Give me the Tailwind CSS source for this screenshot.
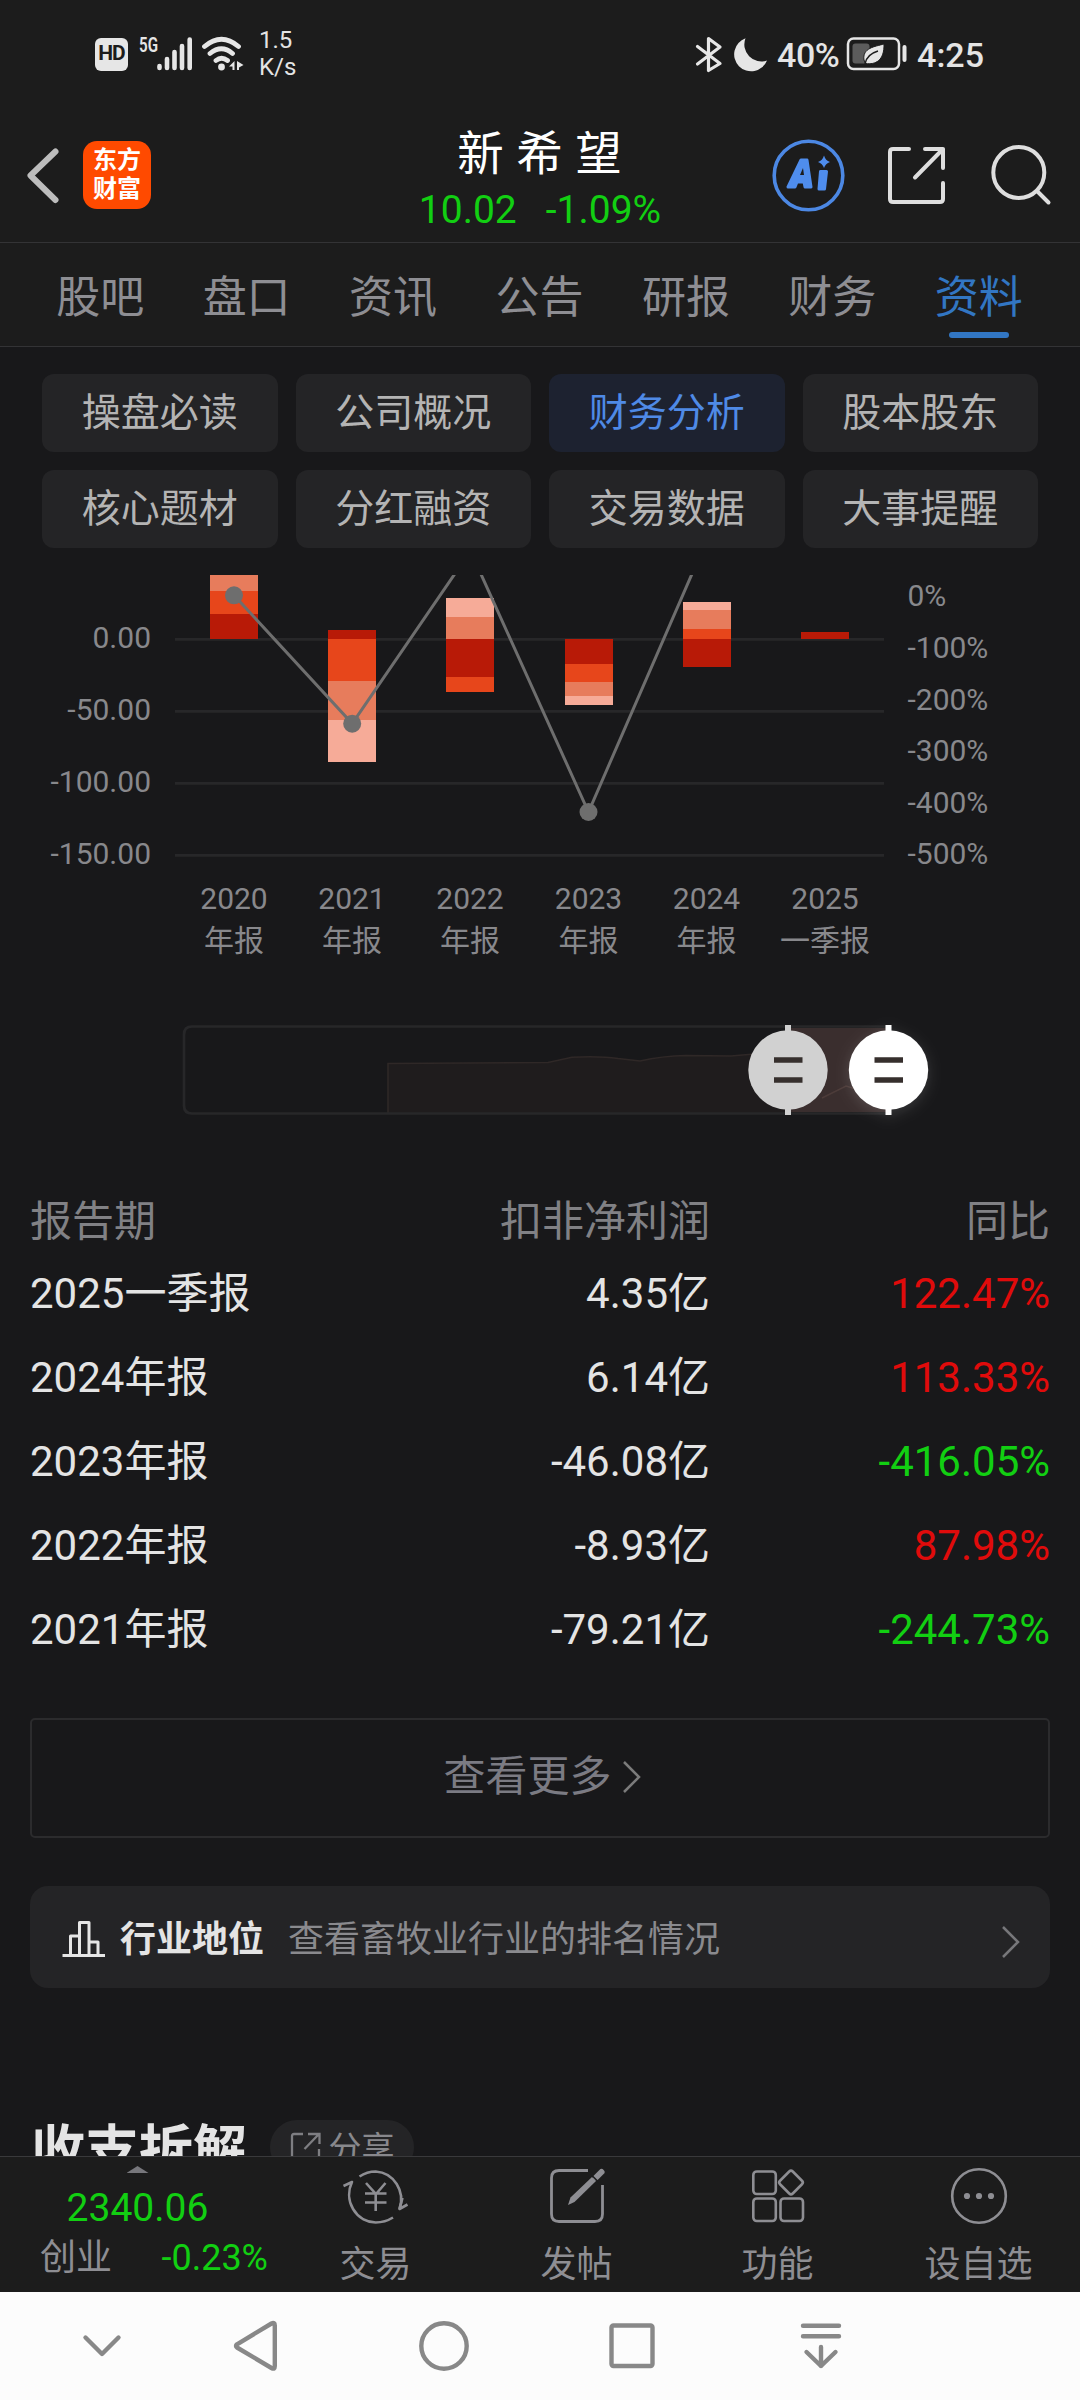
<!DOCTYPE html>
<html lang="zh-CN">
<head>
  <meta charset="UTF-8" />
  <meta name="viewport" content="width=device-width, initial-scale=1.0" />
  <title>新希望 - 财务分析</title>
  <script src="https://cdn.jsdelivr.net/npm/@tailwindcss/browser@4"></script>
</head>
<body class="bg-[#18181a]">
<div class="w-[1080px] h-[2400px] flex flex-col overflow-hidden bg-[#18181a] text-[#e4e4e4] font-['Roboto','Noto_Sans_CJK_SC',sans-serif] whitespace-nowrap">

  <!-- 状态栏 + 标题 -->
  <header class="h-[243px] shrink-0 bg-[#1c1c1c] border-b border-[#333335]">
    <div class="h-[108px] flex items-center justify-between pl-[95px] pr-[96px]">
      <div class="flex items-center">
        <div class="w-[33px] h-[33px] rounded-[6px] bg-[#e6e6e6] text-[#1c1c1c] text-[21px] font-bold flex items-center justify-center tracking-tighter">HD</div>
        <svg class="ml-[10px]" width="110" height="40" viewBox="138 34 110 40" fill="#e6e6e6">
          <text x="139" y="52" font-size="21" font-weight="600" textLength="19" lengthAdjust="spacingAndGlyphs">5G</text>
          <g stroke="#e6e6e6" stroke-width="4.6" stroke-linecap="round">
            <path d="M159.5 66v2M167 59v9M174.5 52v16M182 46v22M189.7 39.5v28.5" />
          </g>
          <g fill="none" stroke="#e6e6e6" stroke-width="4.8" stroke-linecap="round">
            <path d="M204.5 46.5Q221.500 32 238.500 46.500M210 53.500Q221.500 44 232.500 53.500M216 60.500Q221.500 56 227.500 60.500" />
          </g>
          <circle cx="221.500" cy="67" r="3.400" />
          <path d="M234.500 61v9h-2v-3.500h-3.500zM237 61l6.500 4-4.500 2.500v2.500h-2z" />
        </svg>
        <div class="ml-[11px] text-[24px] leading-[27px]">1.5<br>K/s</div>
      </div>
      <div class="flex items-center text-[34px] font-medium">
        <svg width="74" height="40" viewBox="695 34 74 40">
          <path d="M698.500 46.500L721 63.500L709.500 70.500V38.500L721 47L698.500 64" fill="none" stroke="#e6e6e6" stroke-width="3.200" stroke-linecap="round" stroke-linejoin="round" />
          <path d="M746.500 38.300a17 17 0 1 0 21.500 22.200a17 17 0 0 1-21.500-22.200z" fill="#e6e6e6" />
        </svg>
        <span class="ml-[9px] mt-[2px] w-[62px] tracking-[-0.5px]">40%</span>
        <svg class="ml-[7px]" width="62" height="36" viewBox="847 37 62 36">
          <rect x="849" y="39.500" width="51" height="30.500" rx="5.500" fill="none" stroke="#e6e6e6" stroke-width="2.500" />
          <rect x="853.500" y="44.500" width="17" height="20" rx="3" fill="#5c5c5c" />
          <path d="M885 45c-9 2.500-22 4-20 16l1.500 3.500c10 1.500 19-3 18.500-19.500z" fill="#e6e6e6" stroke="#1c1c1c" stroke-width="1" />
          <path d="M866 65c1-6 6-11 13-13" fill="none" stroke="#1c1c1c" stroke-width="1.500" />
          <path d="M905.500 48v13" stroke="#e6e6e6" stroke-width="4" stroke-linecap="round" />
        </svg>
        <span class="ml-[9px] mt-[2px]">4:25</span>
      </div>
    </div>

    <div class="h-[134px] grid grid-cols-[330px_1fr_330px]">
      <div class="flex items-center pl-[26px]">
        <svg width="34" height="60" viewBox="26 145 34 60" fill="none" stroke="#bdbdbd" stroke-width="6" stroke-linecap="round" stroke-linejoin="round">
          <path d="M55.500 151.500L30.500 175.500L55.500 200" />
        </svg>
        <div class="ml-[23px] w-[68px] h-[68px] rounded-[14px] bg-[#ff4a00] text-white text-[24px] leading-[29px] font-bold flex items-center justify-center text-center">东方<br>财富</div>
      </div>
      <div class="flex flex-col items-center text-white">
        <div class="mt-[11px] h-[70px] leading-[70px] -ml-[1px] text-[46.5px] [word-spacing:1px]">新 希 望</div>
        <div class="-mt-[5px] h-[52px] leading-[52px] text-[39px] text-[#12cf12] flex gap-[29px]"><span>10.02</span><span>-1.09%</span></div>
      </div>
      <div class="flex items-center pl-[20px]">
        <svg width="290" height="80" viewBox="770 135 290 80" fill="none" stroke-linecap="round" stroke-linejoin="round">
          <circle cx="808.500" cy="175.500" r="34.300" stroke="#4c88e4" stroke-width="3.600" />
          <path d="M801 160h6l4 27h-6l-1-5h-7l-2 5h-7z" fill="#4f8ded" stroke="#4f8ded" stroke-width="3" />
          <path d="M800 175l3-7 1 7z" fill="#1c1c1c" />
          <path d="M820.500 171.500h6l-2 17.500h-5.500z" fill="#4f8ded" stroke="#4f8ded" stroke-width="3" />
          <path d="M824 155.500q1.500 5 6 6.500q-4.500 1.500-6 6q-1.500-4.500-6-6q4.500-1.500 6-6.500z" fill="#4f8ded" />
          <g stroke="#dedede" stroke-width="4">
            <path d="M909 149H893q-3 0-3 3V199q0 3 3 3H940q3 0 3-3V183M925 149H943V168M943 149L915 177.500" />
            <circle cx="1018.800" cy="172.500" r="25.500" />
            <path d="M1037 191L1048.500 202.500" />
          </g>
        </svg>
      </div>
    </div>
  </header>

  <!-- 主 Tab -->
  <nav class="h-[104px] shrink-0 pl-[27px] pr-[28px] grid grid-cols-7 text-center text-[44px] leading-[110px] text-[#8e8e93] bg-[#1c1c1c] border-b border-[#333335]">
    <span>股吧</span>
    <span>盘口</span>
    <span>资讯</span>
    <span>公告</span>
    <span>研报</span>
    <span>财务</span>
    <span class="relative text-[#3276c3]">资料<i class="absolute left-1/2 -translate-x-1/2 top-[89px] w-[60px] h-[6px] rounded-full bg-[#3276c3]"></i></span>
  </nav>

  <!-- 二级菜单 -->
  <section class="mt-[27px] shrink-0 px-[42px] grid grid-cols-4 gap-x-[18px] gap-y-[18px] text-center text-[39px] leading-[78px] text-[#b4b4b4]">
    <span class="h-[78px] rounded-[12px] bg-[#242426]">操盘必读</span>
    <span class="h-[78px] rounded-[12px] bg-[#242426]">公司概况</span>
    <span class="h-[78px] rounded-[12px] bg-[#1d2230] text-[#4f8ae6]">财务分析</span>
    <span class="h-[78px] rounded-[12px] bg-[#242426]">股本股东</span>
    <span class="h-[78px] rounded-[12px] bg-[#242426]">核心题材</span>
    <span class="h-[78px] rounded-[12px] bg-[#242426]">分红融资</span>
    <span class="h-[78px] rounded-[12px] bg-[#242426]">交易数据</span>
    <span class="h-[78px] rounded-[12px] bg-[#242426]">大事提醒</span>
  </section>

  <!-- 图表 -->
  <svg class="mt-[27px] shrink-0" width="1080" height="400" viewBox="0 575 1080 400" font-size="30" fill="#88888c">
    <path d="M175 639.300H884M175 711.300H884M175 783.300H884M175 855.300H884" stroke="#272729" stroke-width="2.700" />
    <g shape-rendering="crispEdges">
      <!-- 2020 -->
      <path d="M210 575h48v16h-48z" fill="#e77c5c" />
      <path d="M210 591h48v23h-48z" fill="#e7461b" />
      <path d="M210 614h48v25h-48z" fill="#b81a07" />
      <!-- 2021 -->
      <path d="M328 630h48v9h-48z" fill="#b81a07" />
      <path d="M328 639h48v42h-48z" fill="#e7461b" />
      <path d="M328 681h48v39h-48z" fill="#e77c5c" />
      <path d="M328 720h48v42h-48z" fill="#f6ab98" />
      <!-- 2022 -->
      <path d="M446 598h48v19h-48z" fill="#f6ab98" />
      <path d="M446 617h48v22h-48z" fill="#e77c5c" />
      <path d="M446 639h48v38h-48z" fill="#b81a07" />
      <path d="M446 677h48v15h-48z" fill="#e7461b" />
      <!-- 2023 -->
      <path d="M565 639h48v25h-48z" fill="#b81a07" />
      <path d="M565 664h48v18h-48z" fill="#e7461b" />
      <path d="M565 682h48v14h-48z" fill="#e77c5c" />
      <path d="M565 696h48v9h-48z" fill="#f6ab98" />
      <!-- 2024 -->
      <path d="M683 602h48v8h-48z" fill="#f6ab98" />
      <path d="M683 610h48v19h-48z" fill="#e77c5c" />
      <path d="M683 629h48v10h-48z" fill="#e7461b" />
      <path d="M683 639h48v28h-48z" fill="#b81a07" />
      <!-- 2025 -->
      <path d="M801 632h48v7h-48z" fill="#b81a07" />
    </g>
    <path d="M234 595.300L352.200 723.500L470.500 551L588.500 812L706.500 540.500" fill="none" stroke="#6e6e6e" stroke-width="3" />
    <g fill="#6e6e6e">
      <circle cx="234" cy="595.300" r="9" />
      <circle cx="352.200" cy="723.700" r="9" />
      <circle cx="588.500" cy="812" r="9" />
    </g>
    <g text-anchor="end">
      <text x="151" y="648">0.00</text>
      <text x="151" y="720">-50.00</text>
      <text x="151" y="792">-100.00</text>
      <text x="151" y="864">-150.00</text>
    </g>
    <g>
      <text x="907.500" y="606">0%</text>
      <text x="907.500" y="658">-100%</text>
      <text x="907.500" y="710">-200%</text>
      <text x="907.500" y="761">-300%</text>
      <text x="907.500" y="813">-400%</text>
      <text x="907.500" y="864">-500%</text>
    </g>
    <g text-anchor="middle">
      <text x="234" y="909">2020</text><text x="234" y="950.500">年报</text>
      <text x="352" y="909">2021</text><text x="352" y="950.500">年报</text>
      <text x="470" y="909">2022</text><text x="470" y="950.500">年报</text>
      <text x="588.500" y="909">2023</text><text x="588.500" y="950.500">年报</text>
      <text x="706.500" y="909">2024</text><text x="706.500" y="950.500">年报</text>
      <text x="825" y="909">2025</text><text x="825" y="950.500">一季报</text>
    </g>
  </svg>

  <!-- 区间滑块 -->
  <svg class="shrink-0 mt-[25px]" width="1080" height="140" viewBox="0 1000 1080 140">
    <defs>
      <filter id="glow" x="-50%" y="-50%" width="200%" height="200%">
        <feDropShadow dx="0" dy="3" stdDeviation="7" flood-color="#ffffff" flood-opacity="0.14" />
      </filter>
    </defs>
    <path d="M388 1113V1063.500L548 1062.500L572 1057.300Q600 1056 618 1058.500L640 1061Q662 1056 686 1055.500L731 1056L788 1052V1113z" fill="#1f1c1d" />
    <path d="M388 1113V1063.500L548 1062.500L572 1057.300Q600 1056 618 1058.500L640 1061Q662 1056 686 1055.500L731 1056L760 1053.500" fill="none" stroke="#2f2827" stroke-width="1.500" />
    <path d="M888 1026.500H192q-8 0-8 8V1105.500q0 8 8 8H888" fill="none" stroke="#272729" stroke-width="2.700" />
    <path d="M788 1028h100v84h-100z" fill="#3a2e2e" />
    <path d="M822 1098L846 1086L856 1089" fill="none" stroke="#4d3c3a" stroke-width="1.500" />
    <g filter="url(#glow)">
      <path d="M888.500 1025v90" stroke="#fff" stroke-width="6" />
      <circle cx="888.500" cy="1070" r="39.700" fill="#fff" />
    </g>
    <path d="M788 1025v90" stroke="#d1d1d1" stroke-width="6" />
    <circle cx="788" cy="1070" r="39.700" fill="#d1d1d1" />
    <path d="M774 1060h28.500M774 1080h28.500M874.500 1060h28.500M874.500 1080h28.500" stroke="#362f2d" stroke-width="5.500" />
  </svg>

  <!-- 数据表 -->
  <section class="mt-[45px] shrink-0 px-[30px] text-[42px]">
    <div class="h-[73px] leading-[73px] grid grid-cols-[300px_380px_1fr] text-[#818185]">
      <span>报告期</span><span class="text-right">扣非净利润</span><span class="text-right">同比</span>
    </div>
    <div class="h-[84px] leading-[72px] grid grid-cols-[300px_380px_1fr]">
      <span>2025一季报</span><span class="text-right">4.35亿</span><span class="text-right text-[#e00b0b]">122.47%</span>
    </div>
    <div class="h-[84px] leading-[72px] grid grid-cols-[300px_380px_1fr]">
      <span>2024年报</span><span class="text-right">6.14亿</span><span class="text-right text-[#e00b0b]">113.33%</span>
    </div>
    <div class="h-[84px] leading-[72px] grid grid-cols-[300px_380px_1fr]">
      <span>2023年报</span><span class="text-right">-46.08亿</span><span class="text-right text-[#12cf12]">-416.05%</span>
    </div>
    <div class="h-[84px] leading-[72px] grid grid-cols-[300px_380px_1fr]">
      <span>2022年报</span><span class="text-right">-8.93亿</span><span class="text-right text-[#e00b0b]">87.98%</span>
    </div>
    <div class="h-[84px] leading-[72px] grid grid-cols-[300px_380px_1fr]">
      <span>2021年报</span><span class="text-right">-79.21亿</span><span class="text-right text-[#12cf12]">-244.73%</span>
    </div>
  </section>

  <div class="mt-[40px] mx-[30px] h-[120px] shrink-0 rounded-[5px] border-2 border-[#2b2b2d] flex items-center justify-center text-[42px] text-[#7b7b83]">
    <span class="-mt-[3px] ml-[5px]">查看更多</span>
    <svg class="ml-[10px] -mt-[2px]" width="20" height="34" viewBox="0 0 20 34" fill="none" stroke="#7b7b7b" stroke-width="2.500"><path d="M2 2L17 17L2 32" /></svg>
  </div>

  <div class="mt-[48px] mx-[30px] h-[102px] shrink-0 rounded-[18px] bg-[#242426] flex items-center pl-[32px] pr-[30px] text-[36px]">
    <svg class="mt-[3px]" width="44" height="38" viewBox="62 1920 44 38" fill="none" stroke="#e6e6e6" stroke-width="3" stroke-linejoin="round">
      <path d="M62.500 1955.500H105M70.500 1955V1936H79.500M79.500 1955V1922.500H89V1955M89 1942H98V1955" />
    </svg>
    <span class="ml-[14px] mt-[5px] font-bold">行业地位</span>
    <span class="ml-[24px] mt-[5px] text-[#8a8a8e]">查看畜牧业行业的排名情况</span>
    <svg class="ml-auto mt-[9px]" width="20" height="34" viewBox="0 0 20 34" fill="none" stroke="#77777a" stroke-width="2.500"><path d="M3 2L18 17L3 32" /></svg>
  </div>

  <!-- 收支拆解，被底部栏遮住一半 -->
  <section class="h-[168px] shrink-0 overflow-hidden pt-[132px] px-[30px]">
    <div class="flex items-start">
      <h2 class="mt-[5px] ml-[1px] text-[54px] leading-[54px] font-bold">收支拆解</h2>
      <div class="ml-[23px] w-[144px] h-[54px] rounded-full bg-[#242426] flex items-center justify-center text-[33px] text-[#88888c]">
        <svg class="mt-[2px]" width="32" height="32" viewBox="0 0 32 32" fill="none" stroke="#7e7e82" stroke-width="2.300"><path d="M13 2H4q-2 0-2 2V28q0 2 2 2H27q2 0 2-2V17M18 2H29.500V12M29 2L14.500 17" /></svg>
        <span class="ml-[7px] mt-[4px]">分享</span>
      </div>
    </div>
  </section>

  <!-- 底部栏 -->
  <footer class="h-[136px] shrink-0 bg-[#1c1c1c] border-t border-[#39393b] grid grid-cols-[275px_repeat(3,201px)_1fr] text-[36px] text-[#8e8e93]">
    <div class="flex flex-col items-center">
      <i class="mt-[9px] w-[22px] h-[7px] bg-[#77777c] [clip-path:polygon(50%_0,100%_100%,0_100%)]"></i>
      <span class="mt-[10px] h-[50px] leading-[50px] text-[39px] text-[#12cf12]">2340.06</span>
      <div class="w-full pl-[40px] pr-[7px] h-[50px] leading-[50px] flex justify-between"><span>创业</span><span class="text-[#12cf12]">-0.23%</span></div>
    </div>
    <div class="flex flex-col items-center">
      <svg class="mt-[8px]" width="70" height="62" viewBox="341 2165 70 62" fill="none" stroke="#8e8e93" stroke-width="2.600">
        <path d="M359.500 2176.500Q367 2171.500 375.700 2171.500A27 28 0 0 1 399.500 2209L407.500 2204.500" stroke-linejoin="round" />
        <path d="M399.500 2209L402.500 2198M393 2217.500Q385 2222.500 375.700 2222.500A27 28 0 0 1 352 2182L343.500 2186" stroke-linejoin="round" />
        <path d="M366 2183L376 2194L385.500 2183M375.700 2193.500V2211M365 2193.500H386.500M365 2202.500H386.500" />
      </svg>
      <span class="leading-[48px] mt-[14px]">交易</span>
    </div>
    <div class="flex flex-col items-center">
      <svg class="mt-[8px]" width="62" height="62" viewBox="546 2165 62 62" fill="none" stroke="#8e8e93" stroke-width="2.800">
        <path d="M588 2170.500H559q-7.500 0-7.500 7.500V2214q0 7.500 7.500 7.500H595q7.500 0 7.500-7.500V2185" />
        <path d="M568 2205l2.500-7.500L592 2177l4 4L574.500 2202z" fill="#8e8e93" stroke="none" />
        <path d="M596 2177.500L601.500 2172" stroke-width="6" stroke-linecap="round" />
        <path d="M592 2175.500L598.500 2182" stroke="#1c1c1c" stroke-width="1.500" />
      </svg>
      <span class="leading-[48px] mt-[14px]">发帖</span>
    </div>
    <div class="flex flex-col items-center">
      <svg class="mt-[8px]" width="62" height="62" viewBox="747.500 2165 62 62" fill="none" stroke="#8e8e93" stroke-width="2.600">
        <rect x="753.800" y="2171.500" width="22.500" height="22.500" rx="3.500" />
        <rect x="753.800" y="2198.500" width="22.500" height="22.500" rx="3.500" />
        <rect x="781" y="2198.500" width="22.500" height="22.500" rx="3.500" />
        <rect x="782.500" y="2173.500" width="18" height="18" rx="2.500" transform="rotate(45 791.500 2182.500)" />
      </svg>
      <span class="leading-[48px] mt-[14px]">功能</span>
    </div>
    <div class="flex flex-col items-center pr-[1px]">
      <svg class="mt-[8px]" width="62" height="62" viewBox="948 2165 62 62" fill="#8e8e93">
        <circle cx="979" cy="2196" r="26.800" fill="none" stroke="#8e8e93" stroke-width="2.600" />
        <circle cx="967" cy="2196" r="3.100" />
        <circle cx="979" cy="2196" r="3.100" />
        <circle cx="991" cy="2196" r="3.100" />
      </svg>
      <span class="leading-[48px] mt-[14px]">设自选</span>
    </div>
  </footer>

  <!-- 系统导航键 -->
  <div class="h-[108px] shrink-0 bg-[#fcfcfc]">
    <svg width="1080" height="108" viewBox="0 2292 1080 108" fill="none" stroke="#888" stroke-width="4.400" stroke-linecap="round" stroke-linejoin="round">
      <path d="M85.500 2337.500L102 2354L118.500 2337.500" />
      <path d="M237 2344.300L271.500 2323.500Q274.800 2322 274.800 2325.500V2366Q274.800 2370 271.500 2368L237 2347.500Q235 2346 237 2344.300z" />
      <circle cx="444" cy="2346" r="22.700" />
      <rect x="611.500" y="2325.500" width="41" height="40.500" rx="2" />
      <path d="M803 2325.800H839M803 2336.300H839M821 2347V2366M806.500 2352L821 2366L835.500 2352" />
    </svg>
  </div>
</div>
</body>
</html>
